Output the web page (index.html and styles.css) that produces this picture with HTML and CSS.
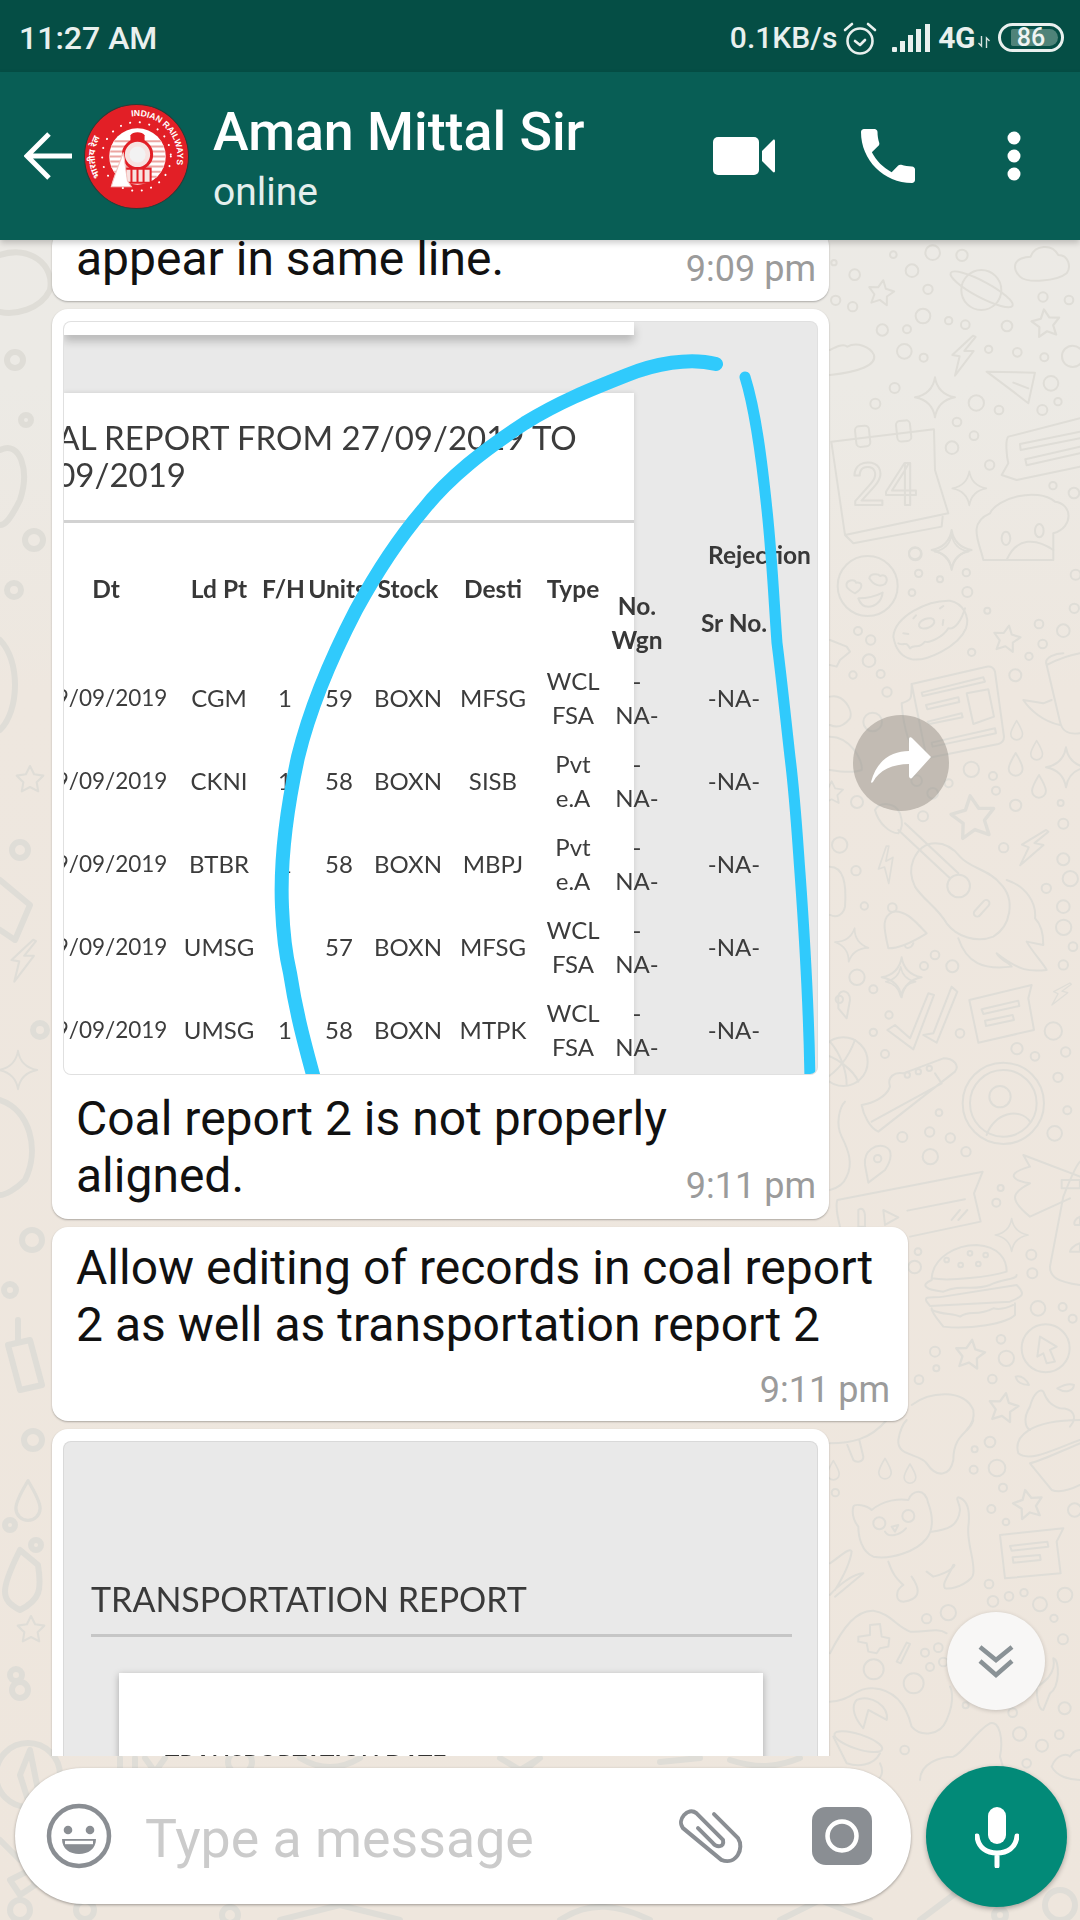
FILE: index.html
```html
<!DOCTYPE html>
<html lang="en">
<head>
<meta charset="utf-8">
<title>Aman Mittal Sir</title>
<link rel="stylesheet" href="styles.css">
</head>
<body>
<div class="phone">
  <svg class="wallpaper" viewBox="0 0 1080 1920" width="1080" height="1920" aria-hidden="true">
    <defs>
      <linearGradient id="wall" x1="0" y1="0" x2="0" y2="1">
        <stop offset="0" stop-color="#eceae6"/><stop offset=".2" stop-color="#eceae5"/><stop offset=".36" stop-color="#eee7df"/><stop offset="1" stop-color="#eee6dd"/>
      </linearGradient>
      <path id="star" d="M0-40 11.8-16.2 38-12.4 19 6.2 23.5 32.4 0 20-23.5 32.4-19 6.2-38-12.4-11.8-16.2Z"/>
      <path id="spark" d="M0-60Q8-10 60 0 8 10 0 60-8 10-60 0-8-10 0-60Z"/>
      <path id="drop" d="M0-35C15-10 22 5 22 15A22 22 0 0 1-22 15C-22 5-15-10 0-35Z"/>
      <path id="bolt" d="M32-58-30 0-8 4-22 62 34-12 6-12 40-54Z"/>
    </defs>
    <rect class="wall-fill" width="1080" height="1920" fill="url(#wall)"/>
    <g class="doodle" transform="translate(760 240) scale(.3333)">
      <circle cx="518" cy="38" r="22"/><circle cx="400" cy="44" r="10"/><circle cx="606" cy="46" r="17"/><circle cx="222" cy="68" r="8"/><circle cx="284" cy="104" r="16"/><circle cx="456" cy="92" r="19"/><circle cx="504" cy="148" r="14"/><circle cx="227" cy="181" r="14"/><circle cx="278" cy="200" r="14"/><circle cx="849" cy="171" r="14"/><circle cx="927" cy="180" r="13"/><circle cx="489" cy="228" r="22"/><circle cx="566" cy="242" r="11"/><circle cx="616" cy="254" r="13"/><circle cx="741" cy="258" r="16"/><circle cx="367" cy="270" r="17"/><circle cx="441" cy="268" r="12"/><circle cx="686" cy="328" r="11"/><circle cx="772" cy="337" r="13"/><circle cx="853" cy="352" r="12"/><circle cx="433" cy="334" r="22"/><circle cx="491" cy="353" r="12"/><circle cx="938" cy="349" r="32"/><circle cx="873" cy="430" r="22"/><circle cx="404" cy="444" r="15"/><circle cx="346" cy="491" r="15"/><circle cx="649" cy="489" r="23"/><circle cx="717" cy="510" r="13"/><circle cx="847" cy="510" r="15"/><circle cx="894" cy="485" r="11"/><circle cx="591" cy="546" r="13"/><circle cx="642" cy="587" r="13"/><circle cx="576" cy="623" r="19"/><circle cx="689" cy="675" r="14"/><circle cx="879" cy="737" r="11"/><circle cx="942" cy="759" r="16"/><circle cx="465" cy="940" r="18"/>
      <circle cx="664" cy="150" r="60"/><ellipse cx="665" cy="148" rx="105" ry="24" transform="rotate(28 665 148)"/>
      <use href="#star" transform="translate(363 160) rotate(10)"/><use href="#star" transform="translate(858 252) rotate(-8) scale(1.1)"/>
      <path d="M765 80C765 55 800 50 812 50 825 15 875 10 895 45 925 45 935 80 920 100 890 125 800 130 780 110 770 100 765 90 765 80Z"/>
      <path d="M210 330C230 320 250 310 262 320 290 305 330 320 342 345 350 375 300 395 210 405"/>
      <use href="#bolt" transform="translate(607 345)"/>
      <use href="#spark" transform="translate(525 472)"/><use href="#spark" transform="translate(628 745) scale(.85)"/><use href="#spark" transform="translate(575 930)"/>
      <path d="M680 395 825 398 805 490 760 455 680 395ZM760 428 805 445"/>
      <path d="M214 605 522 568 525 690 565 820 255 885 214 605ZM255 885 280 910 545 860 548 830"/>
      <rect x="287" y="558" width="42" height="62" rx="12" transform="rotate(-6 308 589)"/><rect x="410" y="542" width="42" height="62" rx="12" transform="rotate(-6 431 573)"/>
      <text x="275" y="795" class="doodle-num">24</text>
      <path d="M960 535 745 590C735 600 740 650 745 670L725 705 770 720 960 680"/><path d="M960 575 780 612 782 630 960 595M960 620 796 658 800 676 960 640"/>
      <path d="M690 820C710 775 830 740 885 785 935 790 945 860 880 880V960H670C660 910 620 850 690 820Z"/><ellipse cx="738" cy="895" rx="13" ry="20"/><ellipse cx="838" cy="872" rx="13" ry="20"/><path d="M740 960C770 890 830 895 880 930"/>
    </g>
    <g class="doodle" transform="translate(830 540) scale(.3333)">
      <circle cx="256" cy="42" r="19"/><circle cx="266" cy="100" r="11"/><circle cx="330" cy="118" r="9"/><circle cx="409" cy="98" r="11"/><circle cx="246" cy="158" r="10"/><circle cx="412" cy="156" r="15"/><circle cx="472" cy="212" r="9"/><circle cx="733" cy="205" r="14"/><circle cx="737" cy="104" r="15"/><circle cx="84" cy="273" r="12"/><circle cx="122" cy="300" r="14"/><circle cx="117" cy="362" r="19"/><circle cx="69" cy="405" r="11"/><circle cx="152" cy="402" r="12"/><circle cx="171" cy="456" r="14"/><circle cx="627" cy="252" r="13"/><circle cx="700" cy="272" r="19"/><circle cx="638" cy="312" r="13"/><circle cx="597" cy="349" r="11"/><circle cx="425" cy="337" r="11"/><circle cx="556" cy="406" r="18"/><circle cx="424" cy="688" r="23"/><circle cx="489" cy="708" r="12"/><circle cx="498" cy="752" r="12"/><circle cx="557" cy="796" r="17"/><circle cx="692" cy="789" r="9"/><circle cx="700" cy="851" r="15"/><circle cx="81" cy="786" r="18"/><circle cx="279" cy="829" r="15"/><circle cx="29" cy="915" r="23"/><circle cx="78" cy="992" r="14"/><circle cx="521" cy="923" r="14"/><circle cx="700" cy="958" r="18"/><circle cx="721" cy="1016" r="23"/><circle cx="649" cy="1045" r="14"/><circle cx="700" cy="1100" r="19"/><circle cx="701" cy="1162" r="23"/><circle cx="729" cy="1220" r="13"/><circle cx="700" cy="1275" r="14"/><circle cx="103" cy="1098" r="11"/><circle cx="315" cy="1245" r="13"/><circle cx="282" cy="1278" r="12"/><circle cx="367" cy="1279" r="18"/><circle cx="81" cy="1312" r="23"/><circle cx="128" cy="546" r="28"/><circle cx="260" cy="722" r="16"/><circle cx="308" cy="760" r="16"/><circle cx="356" cy="730" r="12"/>
      <circle cx="113" cy="138" r="90"/><path d="M85 175C110 175 135 170 158 158 155 185 135 200 115 200 100 200 90 190 85 175ZM50 140C45 120 75 115 78 128 100 125 100 145 75 160 65 155 55 150 50 140ZM118 115C120 100 145 100 150 108 170 100 175 120 165 132 150 142 130 135 118 115Z"/>
      <path d="M190 290C195 230 290 180 360 182 400 190 420 230 408 265 385 320 290 365 245 358 210 350 195 320 190 290Z"/><ellipse cx="290" cy="250" rx="24" ry="14" transform="rotate(-20 290 250)"/><path d="M205 310C225 320 225 300 240 325 255 310 265 330 285 305 300 310 340 290 355 265 375 270 395 240 405 205M250 235 258 226M330 205 340 198M220 280 235 282M340 240 338 255"/>
      <use href="#star" transform="translate(530 298) rotate(10) scale(1.05)"/>
      <use href="#spark" transform="translate(365 35) scale(.85)"/>
      <path d="M245 432 470 380C485 378 492 385 495 395L522 590C522 600 518 608 505 612L290 655"/><path d="M275 458 460 412 465 425 278 468ZM288 495 385 472 388 486 292 508ZM293 545 395 520 398 532 298 552ZM305 608 495 565 498 580 308 620ZM410 460 475 448 492 530 430 552Z"/><path d="M245 432 290 655 275 655C240 640 220 560 215 490 245 480 245 478 245 432Z"/>
      <path d="M650 375C680 360 720 345 750 340M650 375 690 545C695 570 710 585 750 580M650 375C640 350 680 340 700 340M580 480C600 510 640 545 690 555M580 480 640 490 665 480"/>
      <use href="#drop" transform="translate(560 570) scale(.8)"/><use href="#drop" transform="translate(620 630) scale(.8)"/><use href="#drop" transform="translate(557 672) scale(.95)"/><use href="#drop" transform="translate(627 738) scale(.95)"/>
      <use href="#spark" transform="translate(708 682)"/><use href="#spark" transform="translate(65 1215) rotate(10) scale(.85)"/><use href="#spark" transform="translate(215 1312)"/>
      <use href="#star" transform="translate(430 835) rotate(-8) scale(1.7)"/><use href="#star" transform="translate(5 760) scale(.9)"/>
      <use href="#bolt" transform="translate(605 920) rotate(12)"/><use href="#bolt" transform="translate(168 975) rotate(-28) scale(.85)"/>
      <path d="M135 810C150 785 195 785 210 820 220 850 215 870 205 880 180 880 145 850 135 810ZM205 870 360 1015M225 850 385 1000"/><circle cx="386" cy="1038" r="34"/>
      <path d="M250 960C280 890 350 900 390 950 420 985 480 990 510 1030 560 1080 540 1160 490 1190 440 1210 380 1190 350 1150 320 1100 280 1080 255 1040 240 1010 240 985 250 960Z"/><rect x="425" y="1095" width="60" height="20" rx="10" transform="rotate(-48 455 1105)"/>
      <path d="M530 1020C590 1040 620 1090 615 1135 640 1160 640 1200 640 1215L590 1205C610 1240 640 1270 650 1290 600 1295 570 1295 500 1240 510 1260 540 1270 545 1280 460 1290 410 1270 385 1195"/>
      <path d="M175 1225C160 1160 155 1130 190 1115 230 1110 260 1150 290 1180 250 1205 210 1225 175 1225ZM225 1215C225 1230 245 1225 250 1210"/><circle cx="187" cy="1103" r="13"/>
      <path d="M0 980C40 980 50 1030 45 1100 40 1125 20 1135 0 1125"/><path d="M0 470C40 460 70 510 60 535 40 560 20 565 0 555M0 590C60 590 100 660 95 690 70 700 30 695 0 690"/>
      <path d="M0 300 50 320 60 335 30 360 20 380 0 375"/>
    </g>
    <g class="doodle" transform="translate(830 980) scale(.3333)">
      <circle cx="130" cy="28" r="12"/><circle cx="177" cy="105" r="11"/><circle cx="130" cy="157" r="11"/><circle cx="390" cy="160" r="13"/><circle cx="165" cy="222" r="12"/><circle cx="561" cy="206" r="17"/><circle cx="615" cy="229" r="13"/><circle cx="670" cy="153" r="26"/><circle cx="707" cy="216" r="14"/><circle cx="684" cy="292" r="14"/><circle cx="712" cy="391" r="12"/><circle cx="674" cy="460" r="22"/><circle cx="327" cy="398" r="10"/><circle cx="217" cy="471" r="15"/><circle cx="299" cy="456" r="14"/><circle cx="361" cy="474" r="14"/><circle cx="301" cy="530" r="23"/><circle cx="408" cy="515" r="14"/><circle cx="512" cy="624" r="9"/><circle cx="499" cy="668" r="12"/><circle cx="264" cy="815" r="10"/><circle cx="254" cy="861" r="19"/><circle cx="604" cy="824" r="15"/><circle cx="607" cy="880" r="15"/><circle cx="624" cy="985" r="22"/><circle cx="698" cy="981" r="12"/><circle cx="728" cy="1016" r="12"/><circle cx="513" cy="1078" r="13"/><circle cx="529" cy="1135" r="23"/><circle cx="315" cy="1115" r="15"/><circle cx="319" cy="1165" r="9"/><circle cx="267" cy="1199" r="13"/><circle cx="487" cy="1197" r="13"/>
      <path d="M25 60C20 25 60 25 60 60L50 115 25 85Z"/><circle cx="28" cy="58" r="11"/>
      <use href="#spark" transform="translate(212 5) scale(.75)"/>
      <path d="M172 150 250 208 312 45 295 40 240 175 195 135ZM280 165 320 188 382 35 365 20 310 160Z"/>
      <path d="M418 60 605 15 595 55 612 150 445 188Z"/><path d="M455 88 565 62 568 78 460 102ZM465 122 548 105 552 120 468 138Z"/>
      <use href="#bolt" transform="translate(690 40) rotate(15) scale(.65)"/>
      <circle cx="40" cy="245" r="73"/><path d="M-30 220C20 230 70 270 85 305M0 185C30 220 50 270 50 315M75 180C60 220 30 270-20 300"/>
      <path d="M95 375C130 370 170 350 180 320 170 290 195 275 220 280L340 235C370 235 390 255 375 275L145 455C120 445 100 405 95 375ZM125 425 335 310 315 280"/><circle cx="232" cy="285" r="8"/><circle cx="265" cy="275" r="8"/><circle cx="298" cy="265" r="8"/>
      <circle cx="520" cy="370" r="122"/><circle cx="520" cy="370" r="100"/><circle cx="510" cy="350" r="32"/><path d="M470 465C490 400 570 380 600 425"/>
      <path d="M105 555C100 510 140 490 165 500 190 510 185 540 165 570L115 608Z"/><circle cx="143" cy="536" r="11"/>
      <path d="M45 365C30 380 15 430 35 470 55 510 70 550 50 590 40 615 20 625 0 630"/>
      <path d="M22 660 458 575 432 640 452 725 240 770M22 660C15 680 25 720 30 740"/><path d="M232 692 405 658M160 690 205 712 165 735ZM85 690C95 680 105 690 105 710V740H85ZM365 720 390 690M385 720 412 690"/>
      <path d="M750 590 580 525 600 560C530 580 540 600 600 610 540 640 540 660 600 710L720 655"/>
      <path d="M750 545C735 560 720 600 700 650L660 860C660 890 680 905 750 915M695 600H750V625H695ZM750 710C735 715 730 730 735 735H750ZM750 790C730 795 720 810 720 815H750Z"/>
      <use href="#spark" transform="translate(545 765) scale(.82)"/>
      <path d="M305 895C310 830 380 795 440 795 510 800 530 840 530 875 480 890 360 905 305 895ZM305 900C270 915 285 930 340 935 400 910 420 935 480 915 520 895 560 900 560 885M290 965C280 945 310 955 340 950L560 915C590 945 575 950 540 965L300 978ZM305 985C305 1000 325 1020 340 1040 420 1050 530 1030 555 1005V970M305 990C340 1005 370 1000 390 1010 420 990 440 1010 490 985 510 990 530 985 550 975"/>
      <circle cx="350" cy="840" r="7"/><circle cx="392" cy="855" r="7"/><circle cx="420" cy="820" r="7"/><circle cx="445" cy="852" r="7"/><circle cx="467" cy="825" r="7"/>
      <use href="#star" transform="translate(420 1125) rotate(8) scale(1.15)"/><use href="#star" transform="translate(520 1285) rotate(10) scale(1.15)"/>
      <circle cx="647" cy="1105" r="72"/><path d="M630 1070 680 1100 660 1110 675 1145 650 1150 640 1120 622 1130Z"/>
      <path d="M557 1190C575 1185 590 1200 597 1215 575 1215 560 1205 557 1190ZM682 1225C700 1215 720 1210 732 1215 730 1235 705 1240 682 1225Z"/>
      <path d="M600 1280C610 1240 630 1225 640 1235 650 1260 660 1275 690 1285 730 1285 745 1310 720 1340M600 1280C575 1320 590 1345 600 1350"/>
      <path d="M245 1275C300 1235 400 1225 430 1290 435 1320 420 1340 410 1350"/>
    </g>
    <g class="doodle" transform="translate(830 1420) scale(.3333)">
      <circle cx="480" cy="66" r="16"/><circle cx="434" cy="88" r="9"/><circle cx="431" cy="149" r="12"/><circle cx="501" cy="144" r="25"/><circle cx="519" cy="203" r="12"/><circle cx="484" cy="267" r="12"/><circle cx="528" cy="306" r="10"/><circle cx="734" cy="270" r="20"/><circle cx="16" cy="218" r="11"/><circle cx="477" cy="492" r="13"/><circle cx="537" cy="529" r="13"/><circle cx="582" cy="518" r="11"/><circle cx="489" cy="544" r="16"/><circle cx="630" cy="553" r="21"/><circle cx="705" cy="525" r="22"/><circle cx="672" cy="595" r="11"/><circle cx="699" cy="658" r="15"/><circle cx="355" cy="578" r="23"/><circle cx="290" cy="596" r="14"/><circle cx="285" cy="698" r="12"/><circle cx="325" cy="683" r="13"/><circle cx="300" cy="741" r="12"/><circle cx="340" cy="726" r="13"/><circle cx="131" cy="748" r="30"/><circle cx="251" cy="790" r="30"/><circle cx="407" cy="856" r="9"/><circle cx="548" cy="878" r="13"/><circle cx="704" cy="865" r="18"/><circle cx="569" cy="942" r="20"/><circle cx="688" cy="944" r="13"/><circle cx="636" cy="977" r="18"/><circle cx="590" cy="1030" r="13"/><circle cx="224" cy="990" r="13"/>
      <path d="M0 70C60 70 120 60 170 0M52 75 70 120C80 130 100 125 100 110L88 60"/>
      <path d="M430 0C420 40 370 40 370 120 360 170 320 175 290 130 270 100 200 110 205 60 210 30 220 10 230 0"/>
      <use href="#drop" transform="translate(165 145) scale(.85)"/><use href="#drop" transform="translate(240 160) scale(.8)"/><use href="#drop" transform="translate(10 150) scale(.8)"/>
      <path d="M750 0C600 0 550 50 565 100 600 130 690 80 750 60M600 130 665 210C690 220 720 210 750 195M600 130C640 120 700 90 750 70"/>
      <use href="#star" transform="translate(595 255) rotate(-12) scale(1.15)"/>
      <path d="M70 260C75 250 110 255 125 270 160 240 210 235 235 240 245 210 285 200 295 250 310 290 310 330 290 355 260 395 180 420 130 410 95 395 85 350 85 320 70 300 65 280 70 260Z"/><circle cx="148" cy="310" r="18"/><circle cx="235" cy="288" r="18"/><path d="M165 335C175 355 210 345 228 325M185 320 205 315 195 335Z"/><path d="M175 425C190 470 205 480 220 495 195 510 195 545 220 545 260 540 280 520 245 470M290 455 310 470C370 455 380 430 370 435 355 470 335 490 345 505 380 510 430 480 430 460 435 420 410 370 415 320 420 280 415 240 385 232 375 235 390 250 390 270 385 320 350 330 305 335"/>
      <path d="M510 345 700 325 680 365 692 460 525 475Z"/><path d="M540 378 652 365 655 380 545 392ZM548 412 630 405 632 420 550 428Z"/>
      <path d="M0 525C20 500 70 460 100 460L15 530M0 430C30 410 60 380 65 395 60 430 40 470 15 510"/>
      <path d="M0 700C40 620 80 570 130 572 180 580 200 620 240 635 280 640 320 620 350 640M0 845C60 845 80 800 130 805 200 810 230 860 245 920 270 950 330 950 350 900 380 830 360 800 360 800"/>
      <path d="M85 650 120 645 120 615 150 612 155 650 178 655 175 680 150 685 140 700 115 695 110 670 85 665ZM200 725 230 668 240 672 212 730Z"/>
      <path d="M80 840C120 820 180 860 170 900L115 870 100 925C60 880 70 850 80 840Z"/>
      <ellipse cx="85" cy="965" rx="75" ry="22" transform="rotate(18 85 965)"/><path d="M10 950 50 1030C80 1040 130 1040 150 1000M150 1030C165 1060 150 1080 135 1080"/>
      <path d="M270 1080C270 1030 330 1010 370 1010 400 1000 440 930 480 910 510 900 520 960 510 1010 530 1080 530 1080 530 1080"/>
      <path d="M665 1040C680 1000 715 1000 720 1010 730 990 750 990 750 990M665 1040C680 1070 720 1080 750 1080"/>
      <path d="M620 800C640 790 680 760 670 715 690 720 690 800 660 820L640 870C625 870 620 830 620 800Z"/>
    </g>
    <g class="doodle">
      <path d="M0 255C30 245 55 265 50 290 40 310 15 315 0 312"/><circle cx="15" cy="360" r="8"/><circle cx="26" cy="420" r="5"/>
      <path d="M0 450C20 440 30 470 20 500 10 520 5 525 0 525"/><circle cx="14" cy="590" r="7"/><circle cx="34" cy="540" r="9"/>
      <path d="M0 640C20 660 20 710 0 730"/><use href="#star" transform="translate(30 780) scale(.35)"/><circle cx="20" cy="850" r="8"/>
      <path d="M0 880 30 905 15 940 0 930"/><use href="#bolt" transform="translate(22 960) scale(.35)"/><circle cx="40" cy="1030" r="7"/>
      <use href="#spark" transform="translate(18 1070) scale(.32)"/><path d="M0 1100C30 1110 40 1150 25 1180 15 1190 5 1195 0 1195"/><circle cx="32" cy="1240" r="10"/><circle cx="10" cy="1290" r="6"/>
      <path d="M8 1345 30 1340 42 1385 20 1390ZM18 1340V1320"/><circle cx="33" cy="1440" r="9"/><use href="#drop" transform="translate(28 1500) scale(.55)"/><circle cx="10" cy="1525" r="5"/><circle cx="36" cy="1545" r="5"/>
      <path d="M20 1550C0 1590 0 1600 20 1610 40 1600 42 1590 38 1565Z"/><use href="#star" transform="translate(31 1630) scale(.35)"/><circle cx="16" cy="1675" r="6"/><circle cx="20" cy="1690" r="8"/>
      <circle cx="28" cy="1775" r="32"/><path d="M30 1750 38 1790 28 1800 20 1775Z"/><circle cx="240" cy="1762" r="12"/><path d="M120 1758V1772H135V1758M145 1758 155 1772 165 1758"/><path d="M300 1758C320 1770 340 1770 360 1758M500 1758 520 1770 540 1758 530 1766M660 1762 700 1758M730 1760C760 1770 780 1766 800 1758"/>
      <circle cx="20" cy="1910" r="10"/><circle cx="85" cy="1910" r="9"/><circle cx="230" cy="1915" r="8"/><path d="M280 1920 340 1905 400 1920M560 1920C590 1900 620 1905 650 1920M780 1920 820 1900 870 1920M920 1920 960 1890"/><circle cx="60" cy="1890" r="6"/><circle cx="1000" cy="1915" r="6"/><circle cx="1060" cy="1905" r="15"/>
      <path d="M0 1840 20 1860M10 1880 30 1870 35 1885 20 1895Z"/>
    </g>
  </svg>

  <div class="statusbar">
    <span class="clock">11:27 AM</span>
    <div class="status-right">
      <span class="netspeed">0.1KB/s</span>
      <svg class="ic-alarm" viewBox="0 0 34 36" width="34" height="36"><circle cx="17" cy="20" r="12.5"/><path d="M12 20 17 24 22 19M2 9 9 3M32 9 25 3"/></svg>
      <svg class="ic-signal" viewBox="0 0 38 28" width="38" height="28"><rect x="0" y="23" width="5" height="5" rx="1"/><rect x="8" y="17" width="5" height="11"/><rect x="16" y="11" width="5" height="17"/><rect x="24" y="5" width="5" height="23"/><rect x="33" y="0" width="5" height="28"/></svg>
      <span class="net4g">4G</span>
      <svg class="ic-arrows" viewBox="0 0 12 12" width="12" height="12"><path d="M3.5 0V10L0.5 7M8.5 12V2L11.5 5"/></svg>
      <div class="battery"><div class="battery-fill"></div><span class="battery-num">86</span></div>
    </div>
  </div>

  <header class="appbar">
    <svg class="ic-back" viewBox="0 0 50 48" width="50" height="48"><path d="M48 24H3M25 2 3 24 25 46"/></svg>
    <svg class="avatar" viewBox="0 0 104 104" width="105" height="105">
      <defs>
        <path id="arc-en" d="M47 12.3A40 40 0 0 1 87 72"/>
        <path id="arc-hi" d="M16 72A40 40 0 0 1 43 13"/>
      </defs>
      <circle cx="52" cy="52" r="51.5" fill="#e21f26" stroke="#2c3a36"/>
      <text class="av-text"><textPath href="#arc-en">INDIAN RAILWAYS</textPath></text>
      <text class="av-hindi"><textPath href="#arc-hi">भारतीय रेल</textPath></text>
      <circle class="av-dots" cx="52" cy="52" r="34"/>
      <circle cx="53" cy="52" r="28" fill="#fff"/>
      <path class="av-stripes" d="M30 37H76M27 42H79M26 47H80M25 52H81M26 57H80M27 62H79M30 67H76M34 72H72"/>
      <path d="M46 31C48 27 58 27 60 31V37H46Z" fill="#e21f26"/>
      <circle cx="53" cy="50" r="14" fill="#f7e3e1" stroke="#e21f26" stroke-width="3"/>
      <circle cx="53" cy="50" r="8" fill="#f2f2f2"/>
      <path class="av-loco" d="M41 64H66V78H41ZM47 64V78M53 64V78M59 64V78"/>
      <path d="M27 82C29 74 33 64 39 48L43 76 47 82Z" fill="#fff" stroke="#f3c4c0"/>
    </svg>
    <div class="contact">
      <div class="contact-name">Aman Mittal Sir</div>
      <div class="contact-status">online</div>
    </div>
    <div class="actions">
      <svg class="ic-video" viewBox="0 0 62 38" width="62" height="38"><rect width="46" height="38" rx="5"/><path d="M49 14 60 3C61 2 62 3 62 4V34C62 35 61 36 60 35L49 24Z"/></svg>
      <svg class="ic-phone" viewBox="3 3 18 18" width="54" height="54"><path d="M6.62 10.79c1.44 2.83 3.76 5.14 6.59 6.59l2.2-2.2c.27-.27.67-.36 1.02-.24 1.12.37 2.33.57 3.57.57.55 0 1 .45 1 1V20c0 .55-.45 1-1 1-9.39 0-17-7.61-17-17 0-.55.45-1 1-1h3.5c.55 0 1 .45 1 1 0 1.25.2 2.45.57 3.57.11.35.03.74-.25 1.02l-2.2 2.2z"/></svg>
      <svg class="ic-more" viewBox="0 0 14 50" width="14" height="50"><circle cx="7" cy="7" r="6.5"/><circle cx="7" cy="25" r="6.5"/><circle cx="7" cy="43" r="6.5"/></svg>
    </div>
  </header>

  <main class="chat">
    <div class="bubble bubble-first">
      <div class="line-row">
        <p class="msg">appear in same line.</p>
        <span class="time">9:09 pm</span>
      </div>
    </div>

    <div class="bubble bubble-media">
      <div class="shot shot-coal">
        <div class="panel-strip"></div>
        <div class="panel-main">
          <div class="report-title">COAL REPORT FROM 27/09/2019 TO<br><span class="title-second">29/09/2019</span></div>
          <div class="report-table">
            <div class="thead">
              <span class="th th-rej">Rejection</span>
              <span class="th c1">Dt</span><span class="th c2">Ld Pt</span><span class="th c3">F/H</span><span class="th c4">Units</span><span class="th c5">Stock</span><span class="th c6">Desti</span><span class="th c7">Type</span>
              <span class="th th-wgn">No.<br>Wgn</span><span class="th th-sr">Sr No.</span>
            </div>
            <div class="trow"><span>29/09/2019</span><span>CGM</span><span>1</span><span>59</span><span>BOXN</span><span>MFSG</span><span>WCL<br>FSA</span><span>-<br>NA-</span><span>-NA-</span></div>
            <div class="trow"><span>29/09/2019</span><span>CKNI</span><span>1</span><span>58</span><span>BOXN</span><span>SISB</span><span>Pvt<br>e.A</span><span>-<br>NA-</span><span>-NA-</span></div>
            <div class="trow"><span>29/09/2019</span><span>BTBR</span><span>1</span><span>58</span><span>BOXN</span><span>MBPJ</span><span>Pvt<br>e.A</span><span>-<br>NA-</span><span>-NA-</span></div>
            <div class="trow"><span>29/09/2019</span><span>UMSG</span><span>1</span><span>57</span><span>BOXN</span><span>MFSG</span><span>WCL<br>FSA</span><span>-<br>NA-</span><span>-NA-</span></div>
            <div class="trow"><span>29/09/2019</span><span>UMSG</span><span>1</span><span>58</span><span>BOXN</span><span>MTPK</span><span>WCL<br>FSA</span><span>-<br>NA-</span><span>-NA-</span></div>
          </div>
        </div>
        <svg class="scribble" viewBox="0 0 753 752" width="753" height="752"><path d="M652 42C625 35 590 42 563 53 525 68 495 80 461 101 420 128 385 155 359 188 330 222 310 255 292 288 265 340 245 390 234 435 222 490 216 540 218 585 219 610 221 630 226 651 232 690 240 720 251 760"/><path class="scribble-thin" d="M681 55C692 90 698 140 703 188 708 235 710 280 713 321 718 360 722 400 726 435 731 475 733 510 736 551 741 620 745 690 746 760"/></svg>
      </div>
      <p class="msg caption">Coal report 2 is not properly</p>
      <div class="line-row">
        <p class="msg">aligned.</p>
        <span class="time">9:11 pm</span>
      </div>
    </div>

    <div class="bubble bubble-wide">
      <p class="msg">Allow editing of records in coal report<br>2 as well as transportation report 2</p>
      <div class="time-row"><span class="time">9:11 pm</span></div>
    </div>

    <div class="bubble bubble-media bubble-last">
      <div class="shot shot-transport">
        <div class="tr-title">TRANSPORTATION REPORT</div>
        <div class="tr-rule"></div>
        <div class="tr-card"><div class="tr-label">TRANSPORTATION DATE</div></div>
      </div>
    </div>
  </main>

  <button class="fab-forward" aria-label="Forward"><svg viewBox="0 0 60 48" width="60" height="48"><path d="M0 45C6 22 22 14 38 14V2C38 0 40 0 41 1L60 20 41 41C40 42 38 41 38 39V27C22 27 8 33 2 45 1 46 0 46 0 45Z"/></svg></button>
  <button class="fab-scroll" aria-label="Scroll to bottom"><svg viewBox="0 0 36 34" width="36" height="34"><path d="M2 3 18 16 34 3M2 17 18 31 34 17"/></svg></button>

  <footer class="composer">
    <div class="inputbox">
      <svg class="ic-emoji" viewBox="0 0 66 66" width="66" height="66"><circle class="em-ring" cx="33" cy="33" r="30"/><circle cx="22" cy="27" r="4.3"/><circle cx="44" cy="27" r="4.3"/><path d="M16 36H50C50 46 42 51 33 51S16 46 16 36Z"/><path class="em-band" d="M19 39.5H47"/></svg>
      <span class="placeholder">Type a message</span>
      <svg class="ic-clip" viewBox="110 145 195 170" width="65" height="57"><path d="M218 163 290 235C310 265 285 318 240 300L125 205C105 180 140 140 165 160L245 240C250 265 225 262 215 250L170 205"/></svg>
      <svg class="ic-camera" viewBox="0 0 60 58" width="60" height="58"><rect width="60" height="58" rx="14"/><circle class="cam-ring" cx="30" cy="29" r="14.5"/></svg>
    </div>
    <button class="mic" aria-label="Record"><svg viewBox="0 0 44 62" width="44" height="62"><rect x="13" y="1" width="18" height="37" rx="9"/><path class="mic-line" d="M2 30C3 42 12 47 22 47S41 42 42 30M22 47V60"/></svg></button>
  </footer>
</div>
</body>
</html>
```
FILE: styles.css
```css
* { box-sizing: border-box; }
html, body { margin: 0; padding: 0; }
body { width: 1080px; height: 1920px; overflow: hidden; font-family: Roboto, "Noto Sans", sans-serif; }
button { border: 0; padding: 0; font: inherit; }
p { margin: 0; }

.phone { position: relative; width: 1080px; height: 1920px; display: flex; flex-direction: column; overflow: hidden; background: #eee7df; }
.wallpaper { position: absolute; left: 0; top: 0; }
.doodle { fill: none; stroke: #dfddd7; stroke-width: 6; stroke-linejoin: round; stroke-linecap: round; }
.doodle-num { font: 400 175px Roboto, sans-serif; fill: none; }

/* status bar */
.statusbar { position: relative; height: 72px; flex: none; background: #054e45; color: #e9f0ee; display: flex; align-items: center; justify-content: space-between; padding: 3px 16px 0 19px; }
.clock { font-size: 32px; font-weight: 500; }
.status-right { display: flex; align-items: center; }
.netspeed { font-size: 30px; font-weight: 500; margin-right: 6px; }
.ic-alarm { fill: none; stroke: #e9f0ee; stroke-width: 2.6; stroke-linecap: round; stroke-linejoin: round; margin-right: 15px; margin-top: 2px; }
.ic-signal { fill: #e9f0ee; margin-right: 8px; }
.net4g { font-size: 30px; font-weight: 700; letter-spacing: -.5px; }
.ic-arrows { fill: none; stroke: #d6e2df; stroke-width: 1.4; margin: 8px 8px 0 3px; }
.battery { position: relative; width: 66px; height: 29px; border: 3px solid #e9f0ee; border-radius: 15px; display: flex; align-items: center; justify-content: center; }
.battery-fill { position: absolute; left: 10px; top: 3px; bottom: 3px; right: 3px; border-radius: 2px 10px 10px 2px; background: #4f8379; }
.battery-num { position: relative; font-size: 25px; font-weight: 500; color: #eef4f2; }

/* app bar */
.appbar { position: relative; z-index: 2; height: 168px; flex: none; background: #085e55; display: flex; align-items: center; padding: 0 0 0 24px; color: #fff; box-shadow: 0 3px 6px rgba(0,0,0,.2); }
.ic-back { fill: none; stroke: #fff; stroke-width: 5; flex: none; margin-top: -1px; }
.avatar { flex: none; margin-left: 10px; }
.av-text { font: 700 8.6px "Liberation Sans", sans-serif; fill: #fff; }
.av-hindi { font: 700 9px "Noto Sans", sans-serif; fill: #fff; }
.av-dots { fill: none; stroke: #fff; stroke-width: 2; stroke-linecap: round; stroke-dasharray: .1 9.5; }
.av-stripes { fill: none; stroke: #eba6a2; stroke-width: 2; }
.av-loco { fill: #f7e3e1; stroke: #e21f26; stroke-width: 2; }
.contact { margin-left: 24px; display: flex; flex-direction: column; margin-top: 3px; }
.contact-name { font-size: 53.7px; font-weight: 500; line-height: 66px; }
.contact-status { font-size: 39px; line-height: 48px; margin-top: 3px; color: #e4efed; }
.actions { margin-left: auto; display: flex; align-items: center; }
.ic-video { fill: #fff; margin-right: 86px; }
.ic-phone { fill: #fff; margin-right: 92px; }
.ic-more { fill: #fff; margin-right: 59px; }

/* chat */
.chat { position: relative; flex: 1; min-height: 0; overflow: hidden; display: flex; flex-direction: column; gap: 8px; padding-left: 52px; }
.bubble { position: relative; width: 777px; background: #fff; border-radius: 16px; box-shadow: 0 1px 2px rgba(0,0,0,.28); flex: none; }
.bubble-first { margin-top: -10px; padding: 0 13px 14px 24px; }
.line-row { display: flex; justify-content: space-between; align-items: flex-end; }
.msg { font-size: 48px; line-height: 57px; color: #111; }
.time { font-size: 36px; line-height: 37px; color: #9b9b9b; margin-bottom: -1px; }
.bubble-media { padding: 13px 12px 15px 12px; }
.bubble-media .line-row { padding: 0 1px 0 12px; }
.caption { padding-left: 12px; margin-top: 16px; }
.bubble-wide { width: 856px; padding: 12px 18px 13px 24px; }
.time-row { display: flex; justify-content: flex-end; margin-top: 19px; }
.bubble-last { margin-top: 0; padding-bottom: 0; }

/* screenshots in bubbles */
.shot { position: relative; overflow: hidden; background: #e9e9e9; border-radius: 7px; box-shadow: 0 0 0 1px #e0e0e0; font-family: Lato, "Open Sans", sans-serif; color: #3c3c3c; filter: blur(.4px); }
.shot-coal { height: 752px; width: 753px; }
.panel-strip { width: 570px; height: 13px; background: #fff; box-shadow: 0 6px 10px rgba(0,0,0,.22); }
.panel-main { width: 570px; height: 739px; margin-top: 58px; background: #fff; box-shadow: 0 0 5px rgba(0,0,0,.12); position: relative; }
.report-title { height: 130px; margin-left: -54px; padding-top: 26px; font-size: 33px; line-height: 37px; border-bottom: 3px solid #d2d2d2; white-space: nowrap; }
.title-second { display: inline-block; margin-left: -7px; }
.report-table { width: 802px; margin: 15px 0 0 -28px; font-size: 24px; line-height: 34px; }
.thead { display: grid; grid-template-columns: 140px 86px 46px 62px 76px 94px 66px 62px 132px; grid-auto-rows: 17px; margin-bottom: -1px; }
.thead .th { font-size: 24.5px; font-weight: 700; text-align: center; white-space: nowrap; color: #383838; }
.th-rej { grid-column: 9; grid-row: 1 / span 2; margin-left: 40px; }
.c1 { grid-column: 1; grid-row: 3 / span 2; }
.c2 { grid-column: 2; grid-row: 3 / span 2; }
.c3 { grid-column: 3; grid-row: 3 / span 2; margin-left: -3px; }
.c4 { grid-column: 4; grid-row: 3 / span 2; margin-left: -4px; }
.c5 { grid-column: 5; grid-row: 3 / span 2; }
.c6 { grid-column: 6; grid-row: 3 / span 2; }
.c7 { grid-column: 7; grid-row: 3 / span 2; }
.th-wgn { grid-column: 8; grid-row: 4 / span 4; }
.th-sr { grid-column: 9; grid-row: 5 / span 2; }
.trow { display: grid; grid-template-columns: 140px 86px 46px 62px 76px 94px 66px 62px 132px; height: 83px; align-items: center; text-align: center; white-space: nowrap; }
.trow span:first-child { margin-left: -2px; font-size: 22.5px; }
.scribble { position: absolute; left: 0; top: 0; fill: none; stroke: #30cafc; stroke-width: 14; stroke-linecap: round; }
.scribble-thin { stroke-width: 11; }

.shot-transport { height: 340px; width: 753px; padding: 137px 25px 0 27px; box-shadow: 0 0 0 1px #d9d9d9; }
.tr-title { font-size: 34px; line-height: 40px; color: #3a3a3a; }
.tr-rule { height: 3px; background: #c6c6c6; margin-top: 15px; }
.tr-card { width: 644px; height: 120px; margin: 36px 0 0 28px; background: #fff; box-shadow: 0 2px 7px rgba(0,0,0,.28); padding: 76px 0 0 46px; }
.tr-label { font-size: 24px; font-weight: 700; line-height: 30px; color: #333; white-space: nowrap; }

/* overlaid buttons */
.fab-forward { position: absolute; left: 853px; top: 715px; width: 96px; height: 96px; border-radius: 50%; background: rgba(150,144,136,.5); display: flex; align-items: center; justify-content: center; }
.fab-forward svg { fill: #fff; margin-top: -4px; }
.fab-scroll { position: absolute; left: 947px; top: 1612px; width: 98px; height: 98px; border-radius: 50%; background: #f8f7f6; box-shadow: 0 1px 4px rgba(0,0,0,.18); display: flex; align-items: center; justify-content: center; }
.fab-scroll svg { fill: none; stroke: #8a9296; stroke-width: 4.5; }

/* composer */
.composer { position: relative; height: 164px; flex: none; display: flex; align-items: flex-start; padding: 10px 13px 0 15px; }
.inputbox { width: 896px; height: 136px; margin-top: 2px; background: #fff; border-radius: 68px; box-shadow: 0 1px 3px rgba(0,0,0,.35); display: flex; align-items: center; padding: 0 39px 0 31px; }
.ic-emoji { flex: none; fill: #8a8e93; }
.em-ring { fill: none; stroke: #8a8e93; stroke-width: 4.5; }
.em-band { fill: none; stroke: #fff; stroke-width: 3.4; }
.placeholder { margin-left: 33px; font-size: 53.7px; color: #cbcbcb; margin-top: 4px; }
.ic-clip { flex: none; margin-left: auto; margin-right: 69px; fill: none; stroke: #8a8e93; stroke-width: 12; stroke-linecap: round; stroke-linejoin: round; }
.ic-camera { flex: none; fill: #8a8e93; }
.cam-ring { fill: none; stroke: #fff; stroke-width: 4.5; }
.mic { width: 141px; height: 141px; margin-left: 15px; border-radius: 50%; background: #028a78; box-shadow: 0 2px 5px rgba(0,0,0,.3); display: flex; align-items: center; justify-content: center; flex: none; }
.mic svg { fill: #fff; }
.mic-line { fill: none; stroke: #fff; stroke-width: 5; stroke-linecap: round; }
```
